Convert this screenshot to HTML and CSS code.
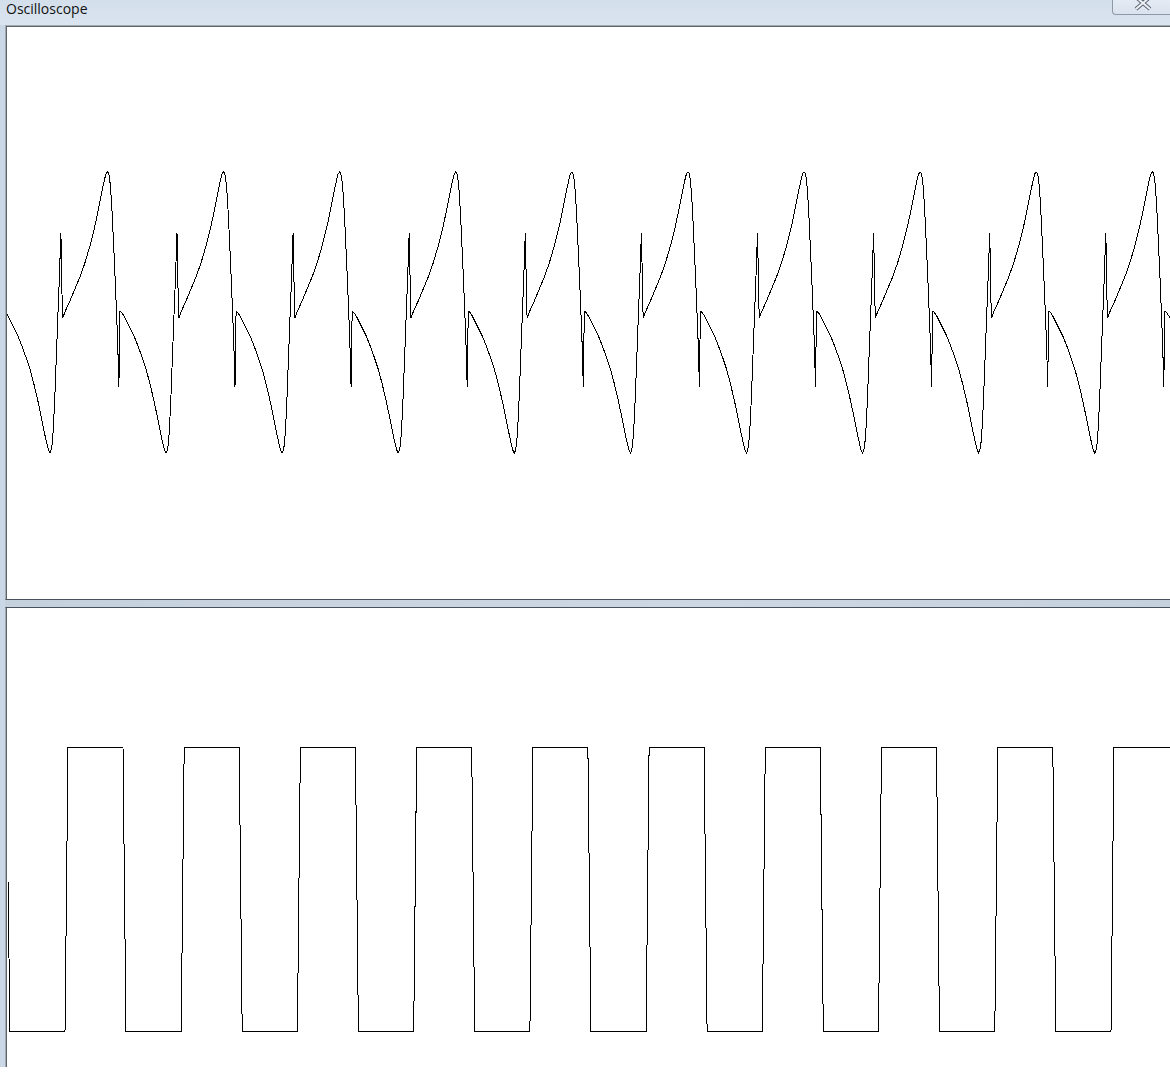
FILE: index.html
```html
<!DOCTYPE html>
<html>
<head>
<meta charset="utf-8">
<title>Oscilloscope</title>
<link rel="stylesheet" href="styles.css">
</head>
<body>
<div class="window">
  <div class="titlebar">
    <span class="title">Oscilloscope</span>
    <div class="close">
      <svg class="close-glyph" width="57" height="14" viewBox="0 0 57 14">
        <path class="x-outer" d="M23 -3 L37 9 M37 -3 L23 9"/>
        <path class="x-inner" d="M23 -3 L37 9 M37 -3 L23 9"/>
      </svg>
    </div>
  </div>
  <div class="client">
    <div class="panel panel-top">
      <svg class="trace trace-top" viewBox="7 26 1163 573">
        <defs>
          <polyline id="period" points="0,311 2,313 4,316 7,322 10,328 14,336 18,346 22,357 26,369 30,384 34,401 38,420 41,435 43,444 44.5,450 46,453 47,451 48,446 49,435 50,417 51,395 52,368 53,342 54,315 55,290 56,262 57,233 57.6,262 58.2,300 58.8,318 61,312 66,301 71,289 76,277 81,263 86,246 91,226 94,212 97,197 99,187 100.5,180 102,174 103.5,172 104.5,173 105.5,177 106.5,186 107.5,200 108.5,218 109.5,240 110.5,262 111.5,285 112.5,310 113.5,335 114.3,360 115,387 115.6,340 116.1,311"/>
        </defs>
        <use href="#period" x="3.9"/>
        <use href="#period" x="120"/>
        <use href="#period" x="236.1"/>
        <use href="#period" x="352.2"/>
        <use href="#period" x="468.3"/>
        <use href="#period" x="584.4"/>
        <use href="#period" x="700.5"/>
        <use href="#period" x="816.6"/>
        <use href="#period" x="932.7"/>
        <use href="#period" x="1048.8"/>
        <use href="#period" x="1164.9"/>
      </svg>
    </div>
    <div class="splitter"></div>
    <div class="panel panel-bottom">
      <svg class="trace trace-bottom" viewBox="7 608 1163 459">
        <polyline points="8.5,882 9.5,1031.5 65,1031.5 68,747.5 123,747.5 126,1031.5 181.2,1031.5 184.2,747.5 239.2,747.5 242.2,1031.5 297.4,1031.5 300.4,747.5 355.4,747.5 358.4,1031.5 413.7,1031.5 416.7,747.5 471.7,747.5 474.7,1031.5 529.9,1031.5 532.9,747.5 587.9,747.5 590.9,1031.5 646.1,1031.5 649.1,747.5 704.1,747.5 707.1,1031.5 762.3,1031.5 765.3,747.5 820.3,747.5 823.3,1031.5 878.5,1031.5 881.5,747.5 936.5,747.5 939.5,1031.5 994.8,1031.5 997.8,747.5 1052.8,747.5 1055.8,1031.5 1111,1031.5 1114,747.5 1172,747.5"/>
      </svg>
    </div>
  </div>
</div>
</body>
</html>
```
FILE: styles.css
```css
html, body {
  margin: 0;
  padding: 0;
  background: #ffffff;
}

.window {
  width: 1170px;
  height: 1067px;
  overflow: hidden;
  display: flex;
  flex-direction: column;
  background: linear-gradient(90deg, #cad7e6 0%, #d3deeb 50%, #cdd9e7 100%);
}

.titlebar {
  height: 25px;
  flex: none;
  display: flex;
  align-items: flex-start;
  background: linear-gradient(180deg, #d4dfec 0%, #dae4f0 100%);
}

.title {
  font-family: "Open Sans", "Noto Sans", sans-serif;
  font-size: 14px;
  line-height: 18px;
  color: #111111;
  padding-left: 6px;
}

.close {
  margin-left: auto;
  width: 57px;
  height: 14px;
  border-left: 1px solid #8e99a8;
  border-bottom: 1px solid #8e99a8;
  border-bottom-left-radius: 4px;
  background: linear-gradient(180deg, #e4ebf4 0%, #d9e2ee 100%);
}

.close-glyph {
  display: block;
}

.x-outer {
  fill: none;
  stroke: #5d6673;
  stroke-width: 4;
}

.x-inner {
  fill: none;
  stroke: #eef2f7;
  stroke-width: 2;
}

.client {
  flex: 1;
  display: flex;
  flex-direction: column;
  margin-left: 5px;
}

.panel {
  background: #ffffff;
  border-left: 1px solid #a3a9b1;
  box-shadow: inset 1px 0 0 #5e646c;
}

.panel-top {
  height: 573px;
  flex: none;
  border-top: 1px solid #a3a9b1;
  border-bottom: 1px solid #48505b;
  box-shadow: inset 1px 1px 0 #5e646c;
}

.splitter {
  height: 7px;
  flex: none;
  background: linear-gradient(90deg, #c6d1de 0%, #cdd7e3 60%, #c6d1de 100%);
}

.panel-bottom {
  flex: 1;
  border-top: 1px solid #48505b;
}

.trace {
  display: block;
  fill: none;
  stroke: #000000;
  stroke-width: 1;
  shape-rendering: crispEdges;
  margin-left: 1px;
}

.trace-top {
  width: 1163px;
  height: 573px;
}

.trace-bottom {
  width: 1163px;
  height: 459px;
}
```
